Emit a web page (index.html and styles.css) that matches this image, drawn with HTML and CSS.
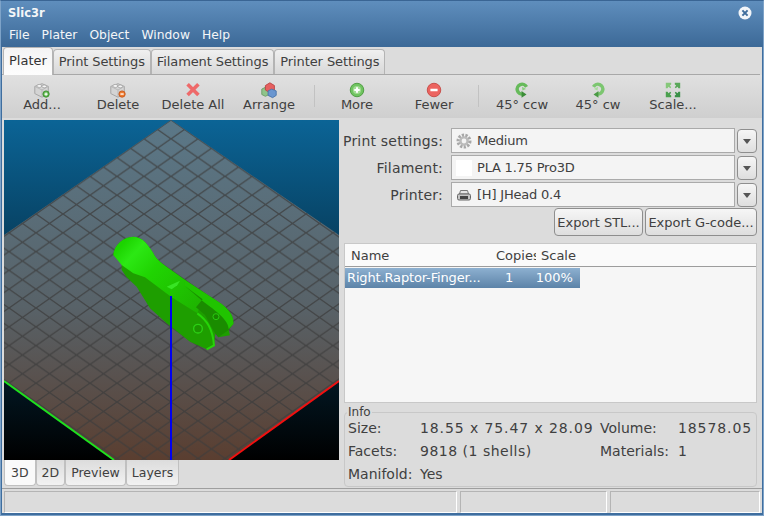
FILE: index.html
```html
<!DOCTYPE html>
<html lang="en">
<head>
    <meta charset="UTF-8">
    <title>Slic3r</title>
    <link rel="stylesheet" href="styles.css">
</head>
<body>
    <div class="window">
        <div class="titlebar">
            <div class="title-row">
                <span class="title">Slic3r</span>
                <svg class="close" width="14" height="14" viewBox="0 0 14 14"><circle cx="7" cy="7" r="6.500" fill="#f2f5f9"/><path d="M4.400 4.400l5.200 5.200M9.600 4.400l-5.200 5.200" stroke="#3f6d9c" stroke-width="2"/></svg>
            </div>
            <div class="menu">
                <span>File</span><span>Plater</span><span>Object</span><span>Window</span><span>Help</span>
            </div>
        </div>
        <div class="content">
            <div class="tabs">
                <div class="tab active">Plater</div>
                <div class="tab">Print Settings</div>
                <div class="tab">Filament Settings</div>
                <div class="tab">Printer Settings</div>
            </div>
            <div class="toolbar">
                <div class="tool"><svg width="20" height="20" viewBox="0 0 20 20"><path d="M2 6l8-3 7 3v8l-7 4-8-4z" fill="#d4d4d4" stroke="#a2a2a2"/><path d="M2 6l8 4 7-4M10 10v8" fill="none" stroke="#b4b4b4"/><ellipse cx="7" cy="5.500" rx="2.800" ry="1.700" fill="#f4f4f4" stroke="#a8a8a8"/><ellipse cx="12.500" cy="6" rx="2.500" ry="1.600" fill="#f4f4f4" stroke="#a8a8a8"/><circle cx="14.500" cy="14.500" r="3.500" fill="#5cb84a" stroke="#3c8c30"/><path d="M12.700 14.500h3.600M14.500 12.700v3.600" stroke="#fff" stroke-width="1.300"/></svg>Add...</div>
                <div class="tool"><svg width="20" height="20" viewBox="0 0 20 20"><path d="M2 6l8-3 7 3v8l-7 4-8-4z" fill="#d4d4d4" stroke="#a2a2a2"/><path d="M2 6l8 4 7-4M10 10v8" fill="none" stroke="#b4b4b4"/><ellipse cx="7" cy="5.500" rx="2.800" ry="1.700" fill="#f4f4f4" stroke="#a8a8a8"/><ellipse cx="12.500" cy="6" rx="2.500" ry="1.600" fill="#f4f4f4" stroke="#a8a8a8"/><circle cx="14.500" cy="14.500" r="3.500" fill="#ee7a2e" stroke="#c4561a"/><path d="M12.700 14.500h3.600" stroke="#fff" stroke-width="1.500"/></svg>Delete</div>
                <div class="tool"><svg width="20" height="20" viewBox="0 0 20 20"><path d="M4 3.500l12 12M16 3.500l-12 12" stroke="#ee6a6a" stroke-width="4"/></svg>Delete All</div>
                <div class="tool"><svg width="20" height="20" viewBox="0 0 20 20"><path d="M2 9l4-2 4 2v6l-4 2-4-2z" fill="#8fc48a" stroke="#6a9c66"/><path d="M6 5l5-3 5 3v5l-5 3-5-3z" fill="#e66060" stroke="#b84444"/><path d="M9 11l4-2 5 2v5l-4 2.500-5-2.500z" fill="#6a96d0" stroke="#4a74aa"/></svg>Arrange</div>
                <div class="sep"></div>
                <div class="tool"><svg width="20" height="20" viewBox="0 0 20 20"><circle cx="10" cy="10" r="7.500" fill="#70c460" stroke="#48983c"/><circle cx="10" cy="10" r="4.500" fill="#a2dc94"/><path d="M7 10h6M10 7v6" stroke="#fff" stroke-width="2.200"/></svg>More</div>
                <div class="tool"><svg width="20" height="20" viewBox="0 0 20 20"><circle cx="10" cy="10" r="7.500" fill="#ec6460" stroke="#c44844"/><path d="M6 10h8" stroke="#fff" stroke-width="2.800"/></svg>Fewer</div>
                <div class="sep"></div>
                <div class="tool"><svg width="20" height="20" viewBox="0 0 20 20"><path d="M15 6.500A5.500 5.500 0 1 0 11 14.500" fill="none" stroke="#66ba5a" stroke-width="3.800"/><path d="M9.500 11l5.500 4-5.500 3.500z" fill="#3c8c38"/><path d="M10 6.500l4.500 2.500-4 1.500z" fill="#8ad07e"/></svg>45° ccw</div>
                <div class="tool"><svg width="20" height="20" viewBox="0 0 20 20"><path d="M5 6.500A5.500 5.500 0 1 1 9 14.500" fill="none" stroke="#7cc670" stroke-width="3.800"/><path d="M10.500 11l-5.500 4 5.500 3.500z" fill="#4a9a44"/><path d="M10 6.500l-4.500 2.500 4 1.500z" fill="#a8dc9c"/></svg>45° cw</div>
                <div class="tool"><svg width="20" height="20" viewBox="0 0 20 20"><path d="M2 2h6v2L6.500 5 8 7 7 8 5 6.500 4 8H2z" fill="#86c87a"/><path d="M18 2v6h-2L15 6.500 13 8l-1-1 1.500-2L12 4V2z" fill="#5aa85a"/><path d="M2 18v-6h2l1 1.500L7 12l1 1-1.500 2L8 16v2z" fill="#4aa04e"/><path d="M18 18h-6v-2l1.500-1L12 13l1-1 2 1.500L16 12h2z" fill="#3a9048"/></svg>Scale...</div>
            </div>
            <div class="main">
                <div class="left">
                    <svg class="canvas" width="335" height="340" viewBox="4 120 335 340">
                        <defs>
                            <linearGradient id="sky" x1="0" y1="0" x2="0" y2="1">
                                <stop offset="0" stop-color="#0b6496"/>
                                <stop offset="1" stop-color="#000"/>
                            </linearGradient>
                            <linearGradient id="bed" x1="0" y1="0" x2="0" y2="1">
                                <stop offset="0" stop-color="#5b7888"/>
                                <stop offset=".55" stop-color="#586268"/>
                                <stop offset="1" stop-color="#5a3e30"/>
                            </linearGradient>
                            <pattern id="grid" width="27" height="18.800" patternUnits="userSpaceOnUse" patternTransform="translate(171 120)">
                                <path d="M0 0L27 18.800M27 0L0 18.800" stroke="#3c3c3c" stroke-opacity=".75" stroke-width="1.400"/>
                            </pattern>
                            <linearGradient id="head" gradientUnits="userSpaceOnUse" x1="100" y1="70" x2="320" y2="270">
                                <stop offset="0" stop-color="#1cd400"/>
                                <stop offset=".15" stop-color="#2ce814"/>
                                <stop offset=".4" stop-color="#20d402"/>
                                <stop offset="1" stop-color="#1eb400"/>
                            </linearGradient>
                        </defs>
                        <rect x="4" y="120" width="335" height="340" fill="url(#sky)"/>
                        <path d="M171 120L339 235V381L229 460H114L4 381V235z" fill="url(#bed)"/>
                        <path d="M171 120L339 235V381L229 460H114L4 381V235z" fill="url(#grid)"/>
                        <path d="M4 381L114 460" stroke="#1ee01e" stroke-width="2"/>
                        <path d="M339 381L229 460" stroke="#f01010" stroke-width="2"/>
                        <g transform="translate(90 220) scale(.3333)">
                            <path d="M70 105C72 75 100 50 130 50C160 52 175 75 190 100C200 120 215 130 240 148L300 190L395 252C420 272 432 290 430 312L416 330L420 346L385 352L376 340L372 376L350 388L300 365L230 310L180 265L140 200L110 172L95 150L95 130z" fill="#1e9e00"/>
                            <path d="M70 105C72 75 100 50 130 50C160 52 175 75 190 100C200 120 215 130 240 148L285 180L338 238L322 280L245 232L165 172L130 160L95 135z" fill="url(#head)"/>
                            <path d="M285 180L395 252C420 272 432 290 430 312L416 326C415 305 395 285 340 245L285 198z" fill="#20c400"/>
                            <path d="M285 198L338 238L318 262L345 285L372 335L385 352L416 330C415 305 395 285 340 245z" fill="#1a8c00"/>
                            <path d="M230 200L270 182L262 196L245 208z" fill="#38e424"/>
                            <circle cx="378" cy="290" r="9" fill="#188400" stroke="#28cc10" stroke-width="3"/>
                            <circle cx="324" cy="326" r="13" fill="#1c9400" stroke="#2cd014" stroke-width="4"/>
                            <path d="M322 280C350 300 368 325 372 376L350 388" fill="none" stroke="#26d408" stroke-width="6"/>
                        </g>
                        <path d="M171 296V460" stroke="#0000f0" stroke-width="2"/>
                    </svg>
                    <div class="view-tabs">
                        <div class="view-tab active">3D</div>
                        <div class="view-tab">2D</div>
                        <div class="view-tab">Preview</div>
                        <div class="view-tab">Layers</div>
                    </div>
                </div>
                <div class="right">
                    <div class="field">
                        <label>Print settings:</label>
                        <div class="combo"><svg width="16" height="16" viewBox="0 0 16 16"><circle cx="8" cy="8" r="5.800" fill="none" stroke="#a8a8a8" stroke-width="3.400" stroke-dasharray="2.200 1.300"/><circle cx="8" cy="8" r="3.600" fill="none" stroke="#bcbcbc" stroke-width="2.400"/></svg><span>Medium</span></div>
                        <div class="drop"><i></i></div>
                    </div>
                    <div class="field">
                        <label>Filament:</label>
                        <div class="combo"><span class="swatch"></span><span>PLA 1.75 Pro3D</span></div>
                        <div class="drop"><i></i></div>
                    </div>
                    <div class="field">
                        <label>Printer:</label>
                        <div class="combo"><svg width="16" height="16" viewBox="0 0 16 16"><path d="M4.500 3.500h7l1 3.500h-9z" fill="#e4e4e4" stroke="#777"/><rect x="1.500" y="7" width="13" height="6" rx="1.500" fill="#c4c4c4" stroke="#666"/><rect x="4" y="9" width="8" height="3" fill="#444"/></svg><span>[H] JHead 0.4</span></div>
                        <div class="drop"><i></i></div>
                    </div>
                    <div class="exports">
                        <button class="btn-stl">Export STL...</button>
                        <button class="btn-gcode">Export G-code...</button>
                    </div>
                    <div class="list">
                        <div class="list-head">
                            <div class="col-name">Name</div>
                            <div class="col-copies">Copies</div>
                            <div class="col-scale">Scale</div>
                        </div>
                        <div class="list-row">
                            <div class="col-name">Right.Raptor-Finger...</div>
                            <div class="col-copies">1</div>
                            <div class="col-scale">100%</div>
                        </div>
                    </div>
                    <div class="info">
                        <span class="info-title">Info</span>
                        <div class="info-grid">
                            <span>Size:</span><span class="num">18.55 x 75.47 x 28.09</span><span>Volume:</span><span class="num">18578.05</span>
                            <span>Facets:</span><span class="facets">9818 (1 shells)</span><span>Materials:</span><span>1</span>
                            <span>Manifold:</span><span>Yes</span><span></span><span></span>
                        </div>
                    </div>
                </div>
            </div>
            <div class="statusbar">
                <div class="cell cell-a"></div>
                <div class="cell cell-b"></div>
                <div class="cell cell-c"></div>
            </div>
        </div>
    </div>
</body>
</html>
```
FILE: styles.css
```css
html, body {
    margin: 0;
    padding: 0;
    overflow: hidden;
}
.window {
    width: 764px;
    height: 516px;
    box-sizing: border-box;
    background-color: #3f6e9f;
    border: 1px solid #7ea3c8;
    border-top-color: #3a6594;
    font-family: "DejaVu Sans", sans-serif;
    font-size: 13px;
    color: #404040;
    display: flex;
    flex-direction: column;
}
.titlebar {
    height: 46px;
    flex: none;
    background: linear-gradient(#5f8ebd, #3c6997);
    color: #f4f6f8;
}
.title-row {
    height: 22px;
    display: flex;
    justify-content: space-between;
    align-items: center;
    padding: 1px 11px 0 7px;
    box-sizing: border-box;
}
.title {
    font-weight: bold;
    font-size: 11.500px;
}
.menu {
    display: flex;
    gap: 12px;
    padding: 5px 0 0 8px;
    font-size: 12.300px;
}
.content {
    flex: 1;
    margin: 0 1px 2px;
    background-color: #dcdcdc;
    display: flex;
    flex-direction: column;
    min-height: 0;
}
.tabs {
    height: 28px;
    flex: none;
    display: flex;
    align-items: flex-end;
    padding-left: 1px;
    box-sizing: border-box;
    border-bottom: 1px solid #a8a8a8;
    margin-right: 2px;
}
.tab {
    height: 25px;
    box-sizing: border-box;
    padding: 4px 5px 0 5px;
    border: 1px solid #b4b4b4;
    border-bottom: none;
    border-radius: 4px 4px 0 0;
    background: linear-gradient(#f0f0f0, #d8d8d8);
    letter-spacing: -.1px;
    white-space: nowrap;
}
.tab.active {
    height: 28px;
    margin-bottom: -1px;
    background: linear-gradient(#f4f4f4, #fdfdfd);
    padding-top: 5px;
    letter-spacing: 0;
    color: #333;
}
.toolbar {
    height: 43px;
    flex: none;
    display: grid;
    grid-template-columns: 68px 84px 66px 86px 4px 82px 72px 16px 72px 80px 70px;
    padding-left: 6px;
    background: linear-gradient(#e0e0e0, #cfcfcf);
}
.tool {
    display: flex;
    flex-direction: column;
    align-items: center;
    padding-top: 6px;
    line-height: 15px;
    white-space: nowrap;
}
.tool svg {
    display: block;
    width: 18px;
    height: 18px;
    margin-bottom: -2px;
}
.sep {
    width: 1px;
    height: 22px;
    margin: 10px auto 0;
    background-color: #c2c2c2;
}
.main {
    flex: 1;
    min-height: 0;
    display: flex;
    padding: 2px 3px 0 2px;
}
.left {
    width: 339px;
    flex: none;
}
.canvas {
    display: block;
}
.view-tabs {
    display: flex;
    height: 27px;
    align-items: flex-start;
    font-size: 12.500px;
}
.view-tab {
    height: 26px;
    box-sizing: border-box;
    padding: 5px 5px 0;
    border: 1px solid #c0c0c0;
    border-top: none;
    border-radius: 0 0 4px 4px;
    background: linear-gradient(#dcdcdc, #f2f2f2);
    line-height: 15px;
}
.view-tab.active {
    background: #fafafa;
    padding: 5px 6px 0;
}
.right {
    flex: 1;
    min-width: 0;
    padding-top: 7px;
    display: flex;
    flex-direction: column;
}
.field {
    display: flex;
    align-items: center;
    height: 27px;
    gap: 2px;
}
.field label {
    width: 100px;
    text-align: right;
    margin-right: 6px;
    font-size: 14px;
    letter-spacing: .2px;
    white-space: nowrap;
    flex: none;
}
.combo {
    width: 284px;
    height: 25px;
    box-sizing: border-box;
    border: 1px solid #aaa;
    background-color: #f4f4f4;
    display: flex;
    align-items: center;
    gap: 5px;
    padding-left: 4px;
    letter-spacing: -.2px;
}
.swatch {
    width: 16px;
    height: 16px;
    background-color: #fff;
}
.drop {
    width: 20px;
    height: 24px;
    box-sizing: border-box;
    border: 1px solid #8e8e8e;
    border-radius: 4px;
    background: linear-gradient(#f6f6f6, #dedede);
    display: flex;
    align-items: center;
    justify-content: center;
}
.drop i {
    width: 0;
    height: 0;
    margin-top: 2px;
    border-left: 4px solid transparent;
    border-right: 4px solid transparent;
    border-top: 5px solid #555;
}
.exports {
    display: flex;
    justify-content: flex-end;
    gap: 2px;
    height: 29px;
    padding-right: 2px;
}
.exports button {
    box-sizing: border-box;
    height: 28px;
    padding: 0;
    border: 1px solid #8e8e8e;
    border-radius: 4px;
    background: linear-gradient(#f6f6f6, #dedede);
    font: inherit;
    color: inherit;
}
.btn-stl {
    width: 89px;
}
.btn-gcode {
    width: 112px;
}
.list {
    height: 160px;
    margin: 6px 2px 0 1px;
    border: 1px solid #c8c8c8;
    background-color: #f6f6f6;
    box-sizing: border-box;
    flex: none;
}
.list-head {
    display: flex;
    height: 22px;
    align-items: center;
    border-bottom: 1px solid #9c9c9c;
    background-color: #fafafa;
    line-height: 23px;
}
.list-head .col-name {
    width: 151px;
}
.list-head .col-copies {
    width: 40px;
    margin-right: 5px;
}
.col-name {
    width: 145px;
    padding-left: 6px;
    box-sizing: border-box;
    white-space: nowrap;
    overflow: hidden;
}
.col-copies {
    width: 45px;
    overflow: hidden;
    white-space: nowrap;
}
.col-scale {
    width: 45px;
    white-space: nowrap;
}
.list-row {
    display: flex;
    width: 235px;
    height: 20px;
    margin-top: 1px;
    line-height: 19px;
    background: linear-gradient(#8db0d0, #5c83a8);
    color: #fff;
}
.list-row .col-name {
    padding-left: 2px;
    letter-spacing: -.15px;
}
.list-row .col-copies {
    padding-left: 17px;
    box-sizing: border-box;
}
.list-row .col-scale {
    padding-left: 3px;
}
.info {
    margin: 9px 2px 0 1px;
    height: 75px;
    box-sizing: border-box;
    border: 1px solid #c8c8c8;
    border-radius: 4px;
    padding: 3px 3px 0;
    position: relative;
}
.info-title {
    position: absolute;
    top: -8px;
    left: 2px;
    padding: 0 1px;
    font-size: 12px;
    line-height: 14px;
    background-color: #dcdcdc;
}
.info-grid {
    display: grid;
    grid-template-columns: 72px 180px 78px 1fr;
    grid-auto-rows: 23px;
    align-items: center;
    font-size: 14px;
    white-space: nowrap;
}
.num {
    letter-spacing: .9px;
}
.facets {
    letter-spacing: .5px;
}
.statusbar {
    height: 25px;
    flex: none;
    display: flex;
    gap: 3px;
    padding: 2px 2px 0;
    box-sizing: border-box;
    border-top: 1px solid #9e9e9e;
}
.cell {
    height: 22px;
    box-sizing: border-box;
    border: 1px solid #b4b4b4;
    border-right-color: #fff;
    border-bottom-color: #fff;
}
.cell-a {
    width: 453px;
}
.cell-b {
    width: 147px;
}
.cell-c {
    flex: 1;
}
```
